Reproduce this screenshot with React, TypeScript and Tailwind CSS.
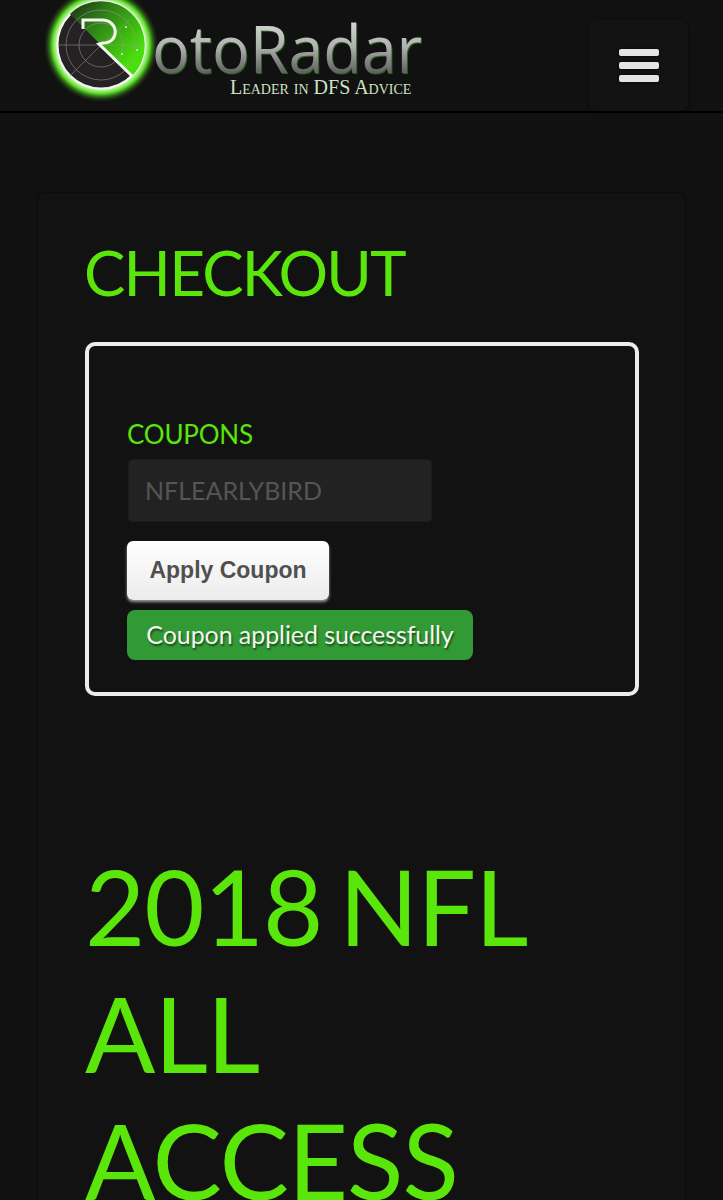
const lato = { fontFamily: 'Lato, sans-serif' }

function RadarLogo() {
  return (
    <svg width="120" height="108" viewBox="0 0 120 108" className="shrink-0">
      <defs>
        <radialGradient id="glow" cx="50%" cy="50%" r="50%">
          <stop offset="76%" stopColor="#d6f8c4" />
          <stop offset="84%" stopColor="#58dc22" />
          <stop offset="100%" stopColor="#111111" stopOpacity="0" />
        </radialGradient>
        <linearGradient id="sweep" x1="0.1" y1="0" x2="0.9" y2="0.7">
          <stop offset="0%" stopColor="#1f3a18" />
          <stop offset="32%" stopColor="#2d7a18" />
          <stop offset="100%" stopColor="#48e00a" />
        </linearGradient>
      </defs>
      <circle cx="56" cy="45" r="58" fill="url(#glow)" />
      <circle cx="56" cy="45" r="43.5" fill="#262224" stroke="#f2f7ee" strokeWidth="2" />
      <path d="M25 14 L87 76 A43.5 43.5 0 0 0 25 14 Z" fill="url(#sweep)" />
      <g fill="none" stroke="#9a9a94" strokeWidth="0.7" opacity="0.8">
        <circle cx="56" cy="45" r="35" />
        <circle cx="56" cy="45" r="22" />
        <path d="M13 45 H99 M56 45 L25 76 M56 45 L85 20" />
      </g>
      <path
        d="M38 29 V20 H57 C74 20 75 43 58 43 L54 44 L87 76"
        fill="none"
        stroke="#f4f8f0"
        strokeWidth="3"
      />
      <circle cx="81" cy="27" r="1" fill="#d6f8c4" />
      <circle cx="77" cy="54" r="1" fill="#d6f8c4" />
      <circle cx="92" cy="50" r="1" fill="#d6f8c4" />
    </svg>
  )
}

export default function App() {
  return (
    <div className="h-[1200px] overflow-hidden bg-[#111111]" style={lato}>
      <header className="flex h-[113px] justify-between border-b-2 border-black pl-[45px] pr-[35px]">
        <div className="flex">
          <RadarLogo />
          <div className="-ml-[13px] flex flex-col items-end pt-[17px]">
            <span
              className="origin-left scale-x-[0.95] bg-gradient-to-b from-[#dcdcdc] via-[#b0b0b0] to-[#555555] bg-clip-text text-[66px] leading-[60px] text-transparent [filter:drop-shadow(1px_1px_0_rgba(70,200,40,0.45))]"
              style={{ fontFamily: '"Open Sans", sans-serif' }}
            >
              otoRadar
            </span>
            <span
              className="mr-[25px] text-[20px] leading-[20px] text-[#cfe0c4]"
              style={{ fontFamily: '"Liberation Serif", serif', fontVariant: 'small-caps' }}
            >
              Leader in DFS Advice
            </span>
          </div>
        </div>
        <button className="mt-[20px] flex h-[91px] w-[99px] flex-col items-center justify-center gap-[6px] rounded-lg bg-[#131313] shadow-[0_1px_3px_rgba(0,0,0,0.6)]">
          <span className="h-[7px] w-10 rounded-[2px] bg-[#e4e4e4] shadow-[0_0_3px_#000]" />
          <span className="h-[7px] w-10 rounded-[2px] bg-[#e4e4e4] shadow-[0_0_3px_#000]" />
          <span className="h-[7px] w-10 rounded-[2px] bg-[#e4e4e4] shadow-[0_0_3px_#000]" />
        </button>
      </header>

      <main className="mx-[38px] mt-[80px] rounded-lg bg-[#121212] px-[47px] pt-[42px] shadow-[0_0_3px_rgba(0,0,0,0.7)]">
        <h1 className="-ml-px text-[62px] leading-[74px] font-normal tracking-[-1.8px] text-[#5ae60b]">CHECKOUT</h1>
        <section className="mt-[33px] flex h-[354px] w-[554px] flex-col items-start rounded-[10px] border-[4px] border-[#ececec] pl-[38px] pt-[72px]">
          <label className="text-[26px] leading-[32px] tracking-[-0.2px] text-[#5ae60b]">COUPONS</label>
          <div className="mt-[9px] ml-px flex h-[63px] w-[304px] items-center rounded border border-[#1a1a1a] bg-[#222222] pl-[16px] text-[25px] text-[#555555]">
            NFLEARLYBIRD
          </div>
          <button
            className="mt-[19px] h-[59px] w-[202px] rounded-md bg-gradient-to-b from-white to-[#ececec] text-[23px] font-bold text-[#505050] shadow-[0_2px_3px_rgba(200,200,200,0.75)]"
            style={{ fontFamily: '"Liberation Sans", sans-serif' }}
          >
            Apply Coupon
          </button>
          <div className="mt-[10px] flex h-[50px] w-[346px] items-center justify-center rounded-lg bg-[#329a35] text-[25px] tracking-[-0.08px] text-[#f2f7ee] [text-shadow:1px_2px_2px_rgba(0,0,0,0.55)]">
            Coupon applied successfully
          </div>
        </section>
        <h2 className="mt-[146px] w-[500px] text-[104px] leading-[127px] tracking-[-1px] [word-spacing:-9px] text-[#5ae60b]">
          2018 NFL ALL ACCESS
        </h2>
      </main>
    </div>
  )
}
